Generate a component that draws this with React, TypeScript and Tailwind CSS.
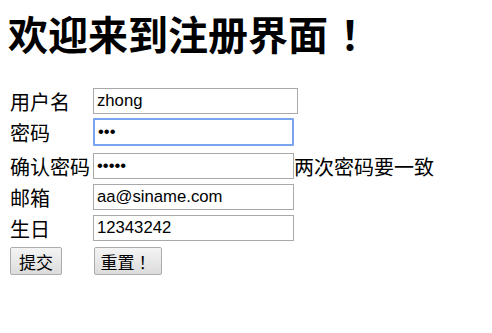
import React from 'react';

const cjk = "font-['Noto_Sans_CJK_SC','Noto_Sans',sans-serif]";
const latin = "font-['Liberation_Sans','Noto_Sans_CJK_SC',sans-serif]";

function Field({
  label,
  value,
  type = 'text',
  width = 'w-[201px]',
  focused = false,
  note,
  rowClass,
}: {
  label: string;
  value: string;
  type?: string;
  width?: string;
  focused?: boolean;
  note?: string;
  rowClass: string;
}) {
  return (
    <div className={`flex items-start ${rowClass}`}>
      <label className={`w-[85px] shrink-0 pl-[2px] h-[26px] flex items-center pt-[2px] text-[20px] leading-none text-black ${cjk}`}>
        {label}
      </label>
      <input
        type={type}
        value={value}
        readOnly
        className={`${width} h-[26px] px-[3px] text-[16.7px] text-black bg-white outline-none ${latin} ${
          focused
            ? 'border-2 border-[#7ba4f0] rounded-[1px] -mt-[1px] h-[28px]'
            : 'border border-[#a9a9a9]'
        }`}
      />
      {note && (
        <span className={`h-[26px] flex items-center pt-[2px] text-[20px] leading-none text-black ${cjk}`}>
          {note}
        </span>
      )}
    </div>
  );
}

export default function App() {
  return (
    <div lang="zh-CN" className="w-[492px] h-[333px] bg-white px-[8px] overflow-hidden">
      <h1 className={`pt-[13px] h-[88px] text-[40px] leading-[40px] font-bold text-black ${cjk}`}>
        欢迎来到注册界面<span className="ml-[12px]">！</span>
      </h1>

      <form onSubmit={(e) => e.preventDefault()}>
        <Field label="用户名" value="zhong" width="w-[205px]" rowClass="h-[31px]" />
        <Field label="密码" value="abc" type="password" focused rowClass="h-[34px]" />
        <Field label="确认密码" value="abcde" type="password" note="两次密码要一致" rowClass="h-[31px]" />
        <Field label="邮箱" value="aa@siname.com" rowClass="h-[31px]" />
        <Field label="生日" value="12343242" rowClass="h-[32px]" />

        <div className="flex items-start">
          <div className="w-[85px] shrink-0 pl-[2px]">
            <button
              type="submit"
              className={`h-[28px] w-[52px] border border-[#acacac] rounded-[2px] bg-gradient-to-b from-[#f4f4f4] to-[#dcdcdc] text-[17px] leading-none text-black ${cjk}`}
            >
              提交
            </button>
          </div>
          <button
            type="reset"
            className={`ml-[1px] h-[28px] w-[68px] border border-[#acacac] rounded-[2px] bg-gradient-to-b from-[#f4f4f4] to-[#dcdcdc] text-[17px] leading-none text-black ${cjk}`}
          >
            重置<span className="ml-[4px]">！</span>
          </button>
        </div>
      </form>
    </div>
  );
}
